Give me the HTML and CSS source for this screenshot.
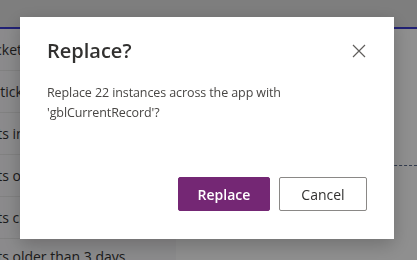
FILE: index.html
```html
<!DOCTYPE html>
<html>
  <head>
    <meta charset="utf-8">
    <title>Replace</title>
    <link rel="stylesheet" href="styles.css">
  </head>
  <body>
    <div class="app">
      <div class="header"></div>
      <div class="main">
        <div class="list">
          <div class="row r1"><span>Open tickets</span></div>
          <div class="row r2"><span>My tickets</span></div>
          <div class="row"><span>Tickets in progress</span></div>
          <div class="row"><span>Tickets on hold</span></div>
          <div class="row"><span>Tickets closed</span></div>
          <div class="row"><span>Tickets older than 3 days</span></div>
        </div>
        <div class="content">
          <div class="divider"></div>
        </div>
      </div>
    </div>

    <div class="overlay">
      <div class="dialog">
        <div class="dialog-head">
          <h2 class="title">Replace?</h2>
          <button class="close" aria-label="Close">
            <svg width="14" height="14" viewBox="0 0 14 14">
              <path d="M1 1 L13 13 M13 1 L1 13" stroke="#605e5c" stroke-width="1.2" fill="none"/>
            </svg>
          </button>
        </div>
        <p class="message">Replace 22 instances across the app with 'gblCurrentRecord'?</p>
        <div class="actions">
          <button class="btn primary">Replace</button>
          <button class="btn">Cancel</button>
        </div>
      </div>
    </div>
  </body>
</html>
```

FILE: styles.css
```css
html {
  font-family: 'Open Sans', 'Noto Sans', sans-serif;
}
body {
  margin: 0;
  width: 417px;
  height: 260px;
  overflow: hidden;
  background: #fff;
  color: #323130;
}
.app {
  height: 260px;
  overflow: hidden;
}
.header {
  height: 27px;
  background: #e0e0e0;
  border-bottom: 2px solid #3b3bd0;
}
.main {
  display: flex;
}
.list {
  width: 176px;
  background: #f8f7f9;
}
.row {
  height: 41px;
  border-bottom: 1px solid #e6e6e6;
  display: flex;
  align-items: center;
  overflow: hidden;
  font-size: 14px;
  color: #333;
  white-space: nowrap;
}
.row:last-child {
  height: 34px;
  border-bottom: none;
}
.row span {
  margin-left: -36px;
}
.row.r1 span {
  margin-left: -53px;
}
.row.r2 span {
  margin-left: -23px;
}
.content {
  flex: 1;
}
.divider {
  margin-top: 136px;
  border-bottom: 1px dashed #5a6a8a;
}

.overlay {
  position: fixed;
  top: 0;
  left: 0;
  right: 0;
  bottom: 0;
  background: rgba(0, 0, 0, 0.44);
  display: flex;
  align-items: flex-start;
  padding: 17px 0 0 20px;
}
.dialog {
  width: 374px;
  height: 222px;
  box-sizing: border-box;
  background: #fff;
  padding: 21px 27px 28px 27px;
  display: flex;
  flex-direction: column;
  box-shadow: 0 6px 18px rgba(0, 0, 0, 0.22);
}
.dialog-head {
  display: flex;
  justify-content: space-between;
  align-items: center;
}
.title {
  margin: 0;
  font-size: 20px;
  font-weight: 600;
  line-height: 26px;
  color: #323130;
}
.close {
  border: none;
  background: none;
  padding: 0;
  width: 14px;
  height: 14px;
  margin-right: 1px;
}
.close svg {
  display: block;
}
.message {
  margin: 19px 0 0 0;
  max-width: 245px;
  font-size: 12.5px;
  letter-spacing: -0.1px;
  line-height: 20px;
  color: #484644;
}
.actions {
  margin-top: auto;
  display: flex;
  justify-content: flex-end;
  gap: 9px;
}
.btn {
  height: 34px;
  width: 88px;
  box-sizing: border-box;
  border: 1px solid #8a8886;
  border-radius: 2px;
  background: #fff;
  font-family: inherit;
  font-size: 14px;
  color: #323130;
}
.btn.primary {
  width: 92px;
  background: #742774;
  border-color: #742774;
  color: #fff;
  font-weight: 600;
}
```
